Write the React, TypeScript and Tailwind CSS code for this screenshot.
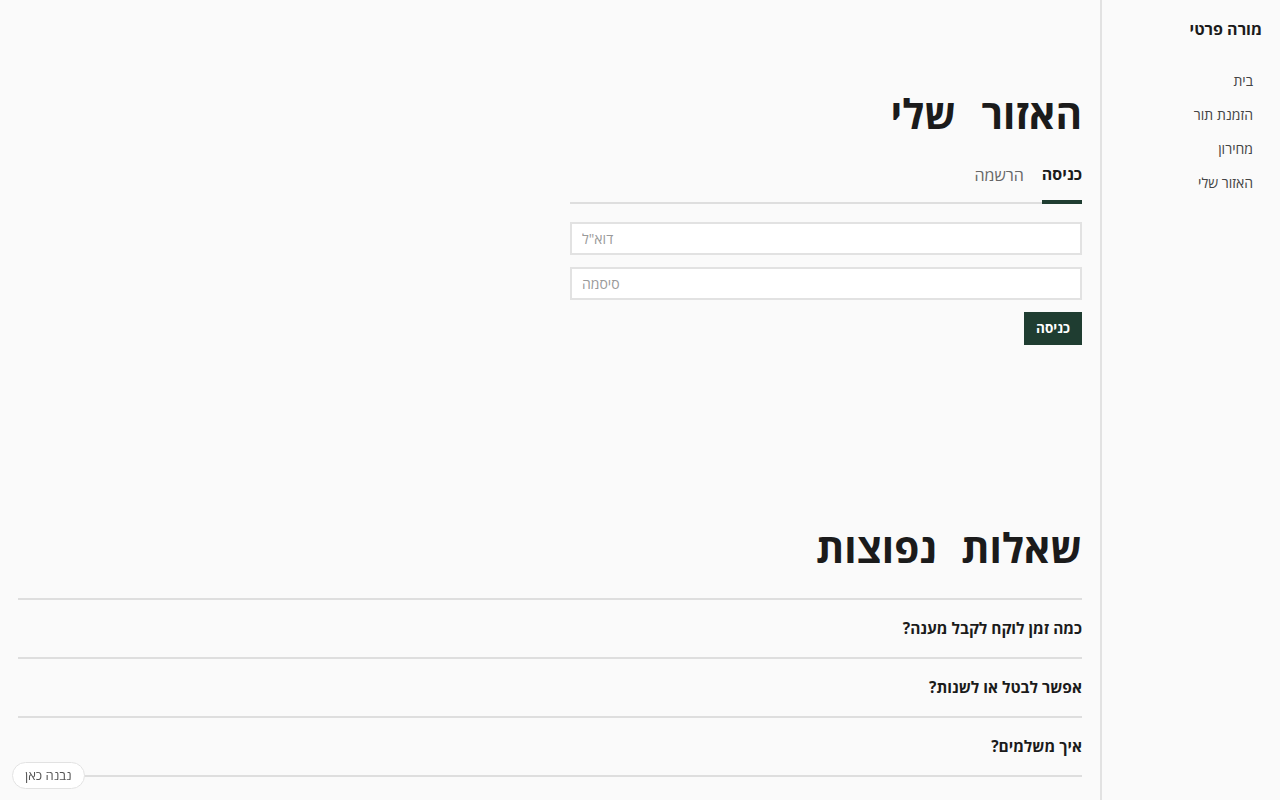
const navLinks = ["בית", "הזמנת תור", "מחירון", "האזור שלי"];

const faqs = ["כמה זמן לוקח לקבל מענה?", "אפשר לבטל או לשנות?", "איך משלמים?"];

function Sidebar() {
  return (
    <aside className="w-[180px] shrink-0 border-l-2 border-[#e2e2e2] min-h-screen pr-[18px] pt-[18px]">
      <div className="text-[16px] font-bold text-[#1b1b1b] leading-[22px]">מורה פרטי</div>
      <nav className="flex flex-col gap-[14px] mt-[31px] pr-[9px]">
        {navLinks.map((l) => (
          <a key={l} href="#" className="block h-[20px] text-[14px] text-[#444] leading-[20px]">
            {l}
          </a>
        ))}
      </nav>
    </aside>
  );
}

function LoginArea() {
  return (
    <section className="pt-[88px]">
      <h1 className="text-[40.5px] font-bold leading-[52px] text-[#1b1b1b] [word-spacing:15px]">האזור שלי</h1>
      <div className="w-[512px] mt-[23px]">
        <div className="flex gap-[18px] border-b-2 border-[#dedede]">
          <button className="text-[16px] font-bold text-[#1b1b1b] pb-[15px] border-b-4 border-[#1f3d31] -mb-[2px] leading-[22px]">
            כניסה
          </button>
          <button className="text-[16px] text-[#666] pb-[15px] leading-[22px]">הרשמה</button>
        </div>
        <div className="flex flex-col gap-[12px] mt-[18px]">
          <input
            placeholder='דוא"ל'
            className="h-[33px] w-full bg-white border-2 border-[#e2e2e2] px-[10px] text-left text-[14px] placeholder:text-[#9a9a9a] outline-none"
          />
          <input
            placeholder="סיסמה"
            type="password"
            className="h-[33px] w-full bg-white border-2 border-[#e2e2e2] px-[10px] text-left text-[14px] placeholder:text-[#9a9a9a] outline-none"
          />
          <div className="flex">
            <button className="h-[33px] px-[12px] bg-[#1f3d31] text-white text-[13.5px] font-bold">כניסה</button>
          </div>
        </div>
      </div>
    </section>
  );
}

function Faq() {
  return (
    <section className="mt-[177px]">
      <h2 className="text-[40.5px] font-bold leading-[52px] text-[#1b1b1b] [word-spacing:14px]">שאלות נפוצות</h2>
      <div className="mt-[24px] border-t-2 border-[#dedede]">
        {faqs.map((q) => (
          <div key={q} className="h-[59px] border-b-2 border-[#dedede] flex items-center pt-[1px]">
            <span className="text-[15.5px] font-bold text-[#1b1b1b]">{q}</span>
          </div>
        ))}
      </div>
    </section>
  );
}

export default function App() {
  return (
    <div
      dir="rtl"
      className="min-h-screen bg-[#fafafa] flex font-['Open_Sans',sans-serif] text-[#1b1b1b]"
    >
      <Sidebar />
      <main className="flex-1 pr-[18px] pl-[18px] pb-[40px]">
        <LoginArea />
        <Faq />
      </main>
      <div className="fixed bottom-[11px] left-[12px] rounded-full border border-[#e2e2e2] bg-white px-[12px] h-[27px] flex items-center text-[13px] text-[#555]">
        נבנה כאן
      </div>
    </div>
  );
}
